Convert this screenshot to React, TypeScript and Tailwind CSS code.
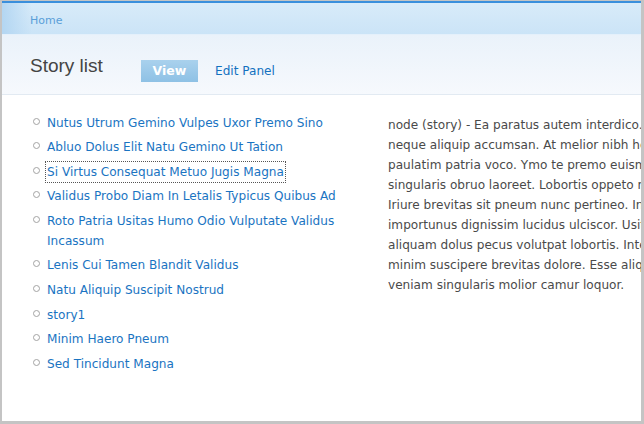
const stories = [
  "Nutus Utrum Gemino Vulpes Uxor Premo Sino",
  "Abluo Dolus Elit Natu Gemino Ut Tation",
  "Si Virtus Consequat Metuo Jugis Magna",
  "Validus Probo Diam In Letalis Typicus Quibus Ad",
  "Roto Patria Usitas Humo Odio Vulputate Validus Incassum",
  "Lenis Cui Tamen Blandit Validus",
  "Natu Aliquip Suscipit Nostrud",
  "story1",
  "Minim Haero Pneum",
  "Sed Tincidunt Magna",
];

// the right column runs past the window edge, so lines are set as in the page
const bodyLines = [
  "node (story) - Ea paratus autem interdico. Abbas",
  "neque aliquip accumsan. At melior nibh hendrerit",
  "paulatim patria voco. Ymo te premo euismod",
  "singularis obruo laoreet. Lobortis oppeto refero",
  "Iriure brevitas sit pneum nunc pertineo. In",
  "importunus dignissim lucidus ulciscor. Usitas",
  "aliquam dolus pecus volutpat lobortis. Interdico",
  "minim suscipere brevitas dolore. Esse aliquip",
  "veniam singularis molior camur loquor.",
];

export default function App() {
  return (
    <div className="h-screen w-full bg-[#c4c4c4] pt-px pl-[2px] pr-[3px] pb-[3px] font-['DejaVu_Sans',sans-serif]">
      <div className="h-full bg-white border-t-2 border-[#3a8fdc] flex flex-col overflow-hidden">
        {/* breadcrumb */}
        <div className="relative h-[32px] shrink-0 bg-gradient-to-b from-[#d8ebf9] to-[#cbe4f7] border-b border-[#e4f0fb]">
          <div className="absolute left-0 top-0 h-full w-[30px] bg-gradient-to-r from-[#b3d6f2] to-transparent" />
          <div className="relative pl-[28px] pt-[11px] text-[11px] leading-[14px] text-[#5a9fd8]">Home</div>
        </div>

        {/* header */}
        <div className="h-[60px] shrink-0 bg-gradient-to-b from-[#eaf2fa] to-[#f6f9fd] border-b border-[#e2eaf2] flex items-start pl-[28px]">
          <h1 className="w-[111px] pt-[20px] font-['Liberation_Sans',sans-serif] text-[19px] leading-[22px] text-[#444]">
            Story list
          </h1>
          <div className="flex items-center pt-[25px]">
            <span className="h-[22px] w-[57px] flex items-center justify-center bg-gradient-to-b from-[#a9d1ed] to-[#8ec1e5] text-white font-bold text-[12.5px]">
              View
            </span>
            <span className="ml-[17px] text-[12.1px] text-[#1271c0] pt-px">Edit Panel</span>
          </div>
        </div>

        {/* content */}
        <div className="flex flex-1 pl-[29px]">
          <ul className="w-[331px] pt-[17.5px] shrink-0">
            {stories.map((s, i) => (
              <li key={s} className="flex mb-[4.6px] text-[12.1px] leading-[20px]">
                <span className="mt-[5px] ml-[2px] mr-[7px] h-[7px] w-[7px] shrink-0 rounded-full border border-[#a3a3a3]" />
                <a
                  className={
                    "text-[#1a74c2] " +
                    (i === 2 ? "self-start outline outline-1 outline-dotted outline-[#555] px-px -mx-px" : "")
                  }
                >
                  {s}
                </a>
              </li>
            ))}
          </ul>
          <div className="flex-1 ml-[26px] pt-[20px] overflow-hidden text-[12.1px] leading-[20px] text-[#4a4a4a]">
            {bodyLines.map((l) => (
              <div key={l} className="whitespace-nowrap">
                {l}
              </div>
            ))}
          </div>
        </div>
      </div>
    </div>
  );
}
